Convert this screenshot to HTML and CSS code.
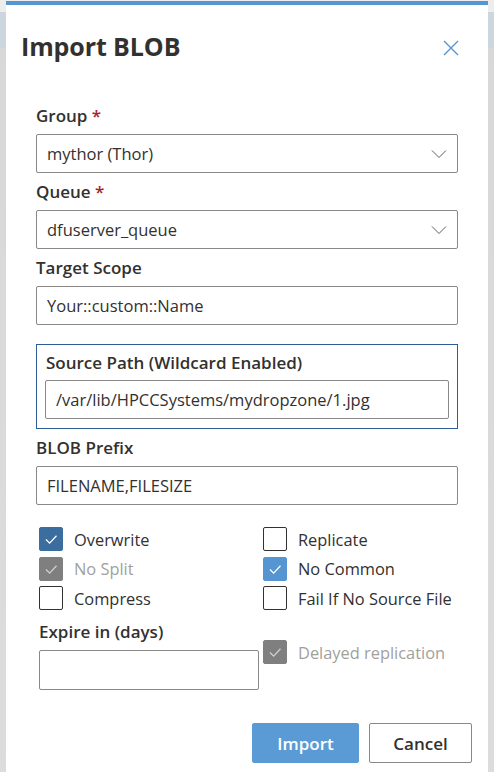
FILE: index.html
```html
<!DOCTYPE html>
<html>
<head>
<meta charset="utf-8">
<link rel="stylesheet" href="styles.css">
</head>
<body>
<div class="dialog">
  <div class="header">
    <h1 class="title">Import BLOB</h1>
    <button class="close" aria-label="Close">
      <svg width="16" height="16" viewBox="0 0 16 16"><path d="M1 1 L15 15 M15 1 L1 15" stroke="#5596d2" stroke-width="1.4" fill="none"/></svg>
    </button>
  </div>
  <div class="content">
    <div class="field">
      <div class="label">Group <span class="req">*</span></div>
      <div class="input dropdown"><span>mythor (Thor)</span>
        <svg class="chev" width="16" height="10" viewBox="0 0 16 10"><path d="M1 1.5 L8 8.5 L15 1.5" stroke="#605e5c" stroke-width="1" fill="none"/></svg>
      </div>
    </div>
    <div class="field">
      <div class="label">Queue <span class="req">*</span></div>
      <div class="input dropdown"><span>dfuserver_queue</span>
        <svg class="chev" width="16" height="10" viewBox="0 0 16 10"><path d="M1 1.5 L8 8.5 L15 1.5" stroke="#605e5c" stroke-width="1" fill="none"/></svg>
      </div>
    </div>
    <div class="field">
      <div class="label">Target Scope</div>
      <div class="input"><span>Your::custom::Name</span></div>
    </div>
    <div class="source-box">
      <div class="label">Source Path (Wildcard Enabled)</div>
      <div class="input"><span>/var/lib/HPCCSystems/mydropzone/1.jpg</span></div>
    </div>
    <div class="field">
      <div class="label">BLOB Prefix</div>
      <div class="input"><span>FILENAME,FILESIZE</span></div>
    </div>
    <div class="checks">
      <div class="check"><span class="box on-dark"><svg viewBox="0 0 24 24"><path d="M6.5 12.5 L10.5 16.5 L18 8.5" stroke="#fff" stroke-width="1.4" fill="none"/></svg></span><span class="ctext">Overwrite</span></div>
      <div class="check"><span class="box"></span><span class="ctext">Replicate</span></div>
      <div class="check"><span class="box on-disabled"><svg viewBox="0 0 24 24"><path d="M6.5 12.5 L10.5 16.5 L18 8.5" stroke="#d0d0d0" stroke-width="1.4" fill="none"/></svg></span><span class="ctext disabled">No Split</span></div>
      <div class="check"><span class="box on"><svg viewBox="0 0 24 24"><path d="M6.5 12.5 L10.5 16.5 L18 8.5" stroke="#fff" stroke-width="1.4" fill="none"/></svg></span><span class="ctext">No Common</span></div>
      <div class="check"><span class="box"></span><span class="ctext">Compress</span></div>
      <div class="check"><span class="box"></span><span class="ctext">Fail If No Source File</span></div>
    </div>
    <div class="expire-row">
      <div class="expire">
        <div class="label">Expire in (days)</div>
        <div class="input"></div>
      </div>
      <div class="check delayed"><span class="box on-disabled"><svg viewBox="0 0 24 24"><path d="M6.5 12.5 L10.5 16.5 L18 8.5" stroke="#d0d0d0" stroke-width="1.4" fill="none"/></svg></span><span class="ctext disabled">Delayed replication</span></div>
    </div>
  </div>
  <div class="footer">
    <button class="btn primary">Import</button>
    <button class="btn">Cancel</button>
  </div>
</div>
</body>
</html>
```
FILE: styles.css
```css
html, body {
  margin: 0;
  padding: 0;
}
body {
  width: 494px;
  height: 772px;
  overflow: hidden;
  background: linear-gradient(to bottom, #ededed 0, #ededed 12px, #cdd5de 12px, #cdd5de 48px, #d8d8d8 48px, #dcdcdc 100%);
  font-family: "Open Sans", "Noto Sans", sans-serif;
  color: #323130;
}
.dialog {
  margin: 1px 0 0 6px;
  width: 482px;
  height: 771px;
  background: #fff;
  border-top: 4px solid #5596d2;
  box-sizing: border-box;
}
.header {
  display: flex;
  justify-content: space-between;
  align-items: flex-start;
  padding: 24px 29px 0 15px;
  height: 92px;
  box-sizing: border-box;
}
.title {
  margin: 0;
  font-size: 25px;
  font-weight: 700;
  line-height: 34px;
  color: #323130;
  letter-spacing: -0.1px;
}
.close {
  border: 0;
  background: none;
  padding: 0;
  margin-top: 11px;
  width: 16px;
  height: 16px;
  display: flex;
}
.content {
  padding: 0 30px;
}
.label {
  font-size: 17px;
  font-weight: 600;
  line-height: 25px;
  padding: 6px 0;
  color: #323130;
}
.req {
  color: #a4262c;
}
.input {
  height: 39px;
  box-sizing: border-box;
  border: 1px solid #8a8886;
  border-radius: 2px;
  display: flex;
  align-items: center;
  padding: 0 10px;
  font-size: 16.5px;
  color: #323130;
}
.dropdown {
  justify-content: space-between;
}
.source-box {
  margin-top: 19px;
  border: 1px solid #2f5d98;
  padding: 0 8px 9px 9px;
}
.source-box .label {
  padding: 5px 0 5px;
}
.source-box .input {
  margin-left: -1px;
}
.checks {
  margin-top: 22px;
  padding-left: 3px;
  display: grid;
  grid-template-columns: 224px 1fr;
  row-gap: 5.5px;
}
.check {
  display: flex;
  align-items: center;
  gap: 11px;
  height: 24px;
}
.box {
  width: 24px;
  height: 24px;
  box-sizing: border-box;
  border: 1px solid #323130;
  border-radius: 2px;
  flex: none;
  display: flex;
}
.box svg {
  width: 22px;
  height: 22px;
}
.box.on-dark {
  background: #3b6e9f;
  border-color: #3b6e9f;
}
.box.on {
  background: #5596d2;
  border-color: #5596d2;
}
.box.on-disabled {
  background: #7f7f7f;
  border-color: #7f7f7f;
}
.ctext {
  font-size: 16.4px;
  color: #323130;
}
.ctext.disabled {
  color: #a19f9d;
}
.expire-row {
  margin-top: 3px;
  padding-left: 3px;
  display: flex;
  align-items: flex-start;
}
.expire {
  width: 220px;
}
.expire .input {
  height: 40px;
}
.delayed {
  margin-left: 4px;
  margin-top: 27px;
}
.footer {
  display: flex;
  justify-content: flex-end;
  gap: 10px;
  padding: 33px 16px 0 0;
}
.btn {
  height: 40px;
  box-sizing: border-box;
  border: 1px solid #8a8886;
  border-radius: 2px;
  background: #fff;
  font-family: inherit;
  font-size: 17px;
  font-weight: 600;
  color: #323130;
  width: 103px;
  padding: 0;
}
.btn.primary {
  width: 107px;
  background: #5b9bd5;
  border-color: #5b9bd5;
  color: #fff;
}
```
